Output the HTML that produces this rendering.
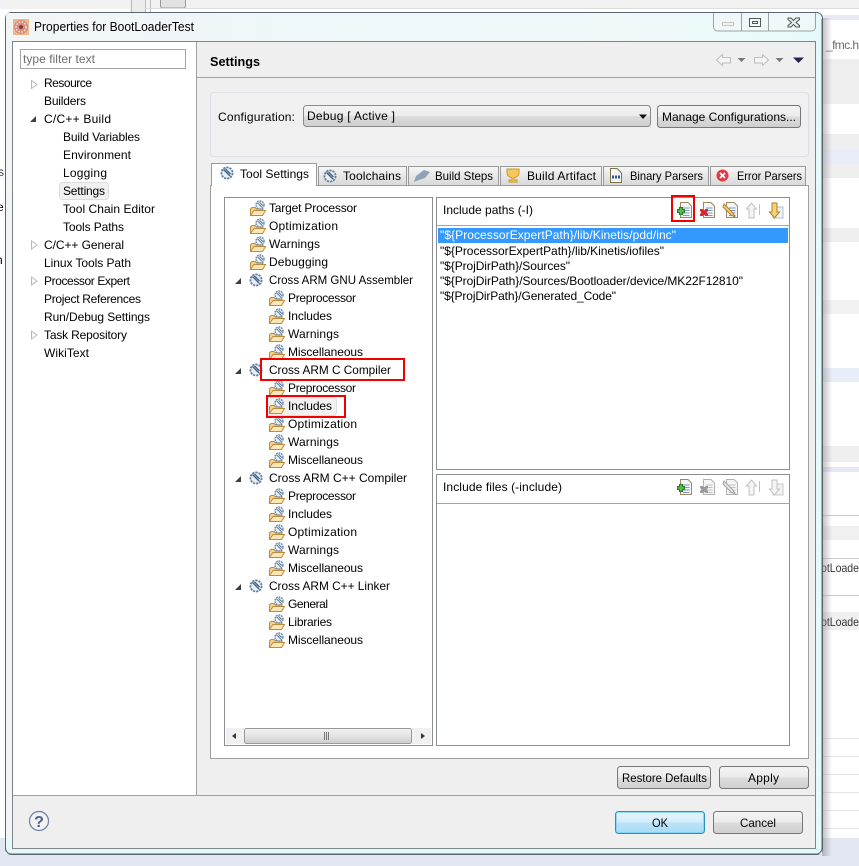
<!DOCTYPE html>
<html><head><meta charset="utf-8"><style>
html,body{margin:0;padding:0;background:#fff}
svg{display:block}
text{font-family:"Liberation Sans",sans-serif;font-size:12px;fill:#000}
</style></head><body>
<svg width="859" height="866" viewBox="0 0 859 866" xmlns="http://www.w3.org/2000/svg">
<defs>
<linearGradient id="btn" x1="0" y1="0" x2="0" y2="1"><stop offset="0" stop-color="#f4f4f4"/><stop offset=".48" stop-color="#ececec"/><stop offset=".52" stop-color="#dcdcdc"/><stop offset="1" stop-color="#cfcfcf"/></linearGradient>
<linearGradient id="ok" x1="0" y1="0" x2="0" y2="1"><stop offset="0" stop-color="#e6f5fd"/><stop offset=".48" stop-color="#d4edfb"/><stop offset=".52" stop-color="#bce3f9"/><stop offset="1" stop-color="#a7d9f5"/></linearGradient>
<linearGradient id="tab" x1="0" y1="0" x2="0" y2="1"><stop offset="0" stop-color="#f6f6f6"/><stop offset="1" stop-color="#d8d8d8"/></linearGradient>
<linearGradient id="sb" x1="0" y1="0" x2="0" y2="1"><stop offset="0" stop-color="#f2f2f2"/><stop offset=".5" stop-color="#e4e4e4"/><stop offset="1" stop-color="#cdcdcd"/></linearGradient>
<linearGradient id="title" x1="0" y1="0" x2="1" y2="0"><stop offset="0" stop-color="#f3f5f6"/><stop offset=".5" stop-color="#ecf8fa"/><stop offset=".75" stop-color="#f0f8f8"/><stop offset="1" stop-color="#e6fafb"/></linearGradient>
<linearGradient id="shadow" x1="0" y1="0" x2="1" y2="0"><stop offset="0" stop-color="#888" stop-opacity=".55"/><stop offset="1" stop-color="#888" stop-opacity="0"/></linearGradient>
<g id="gear"><circle cx="7" cy="7" r="5.6" fill="#e8eef4" stroke="#5b7d9e" stroke-width="1.8" stroke-dasharray="2.2 1"/><path d="M3.5 3.5L10 10M5.5 3L10.5 8" stroke="#47688a" stroke-width="1.5" fill="none"/></g>
<g id="folder"><path d="M.5 15.500V9L2 7.500H5L6.500 9H13L12.500 15.500Z" fill="#f9d08a" stroke="#bd8b3e"/><path d="M.5 15.500L4 10.500H15.500L12.500 15.500Z" fill="#fde6b6" stroke="#bd8b3e"/><circle cx="10" cy="5" r="4" fill="#edf2f6" stroke="#6a8aaa" stroke-width="1.400" stroke-dasharray="1.800 .8"/><path d="M7.500 2.800L12 7.300M9.500 2.300L12.800 5.600" stroke="#53759a" stroke-width="1"/></g>
<g id="doc"><path d="M3.500 .5H11L14.500 4V15.500H3.500Z" fill="#f4f6fa" stroke="#9a8a5e"/><path d="M6 6H12.500M6 8.500H12.500M6 11H12.500M6 13.500H12.500" stroke="#7d98c0"/></g>
<g id="docg" opacity=".9"><path d="M3.500 .5H11L14.500 4V15.500H3.500Z" fill="#f4f4f4" stroke="#aaa"/><path d="M6 6H12.500M6 8.500H12.500M6 11H12.500M6 13.500H12.500" stroke="#bbb"/></g>
</defs>

<!-- background -->
<rect width="859" height="866" fill="#fff"/>
<rect width="859" height="9" fill="#f2f2f2"/>
<rect x="130" y="0" width="15" height="12" fill="#ececec"/>
<path d="M131.500 0V12M145.500 0V12M150.500 0V12" stroke="#bbb"/>
<rect x="160.500" y="-3" width="25" height="11" rx="2" fill="#e2e2e2" stroke="#999"/>
<path d="M145 8.500H859" stroke="#ddd"/>
<rect x="822" y="15" width="37" height="5" fill="#e7e9f5"/>
<rect x="822" y="59" width="37" height="45" fill="#efefef"/>
<rect x="822" y="134" width="37" height="16" fill="#efefef"/>
<rect x="822" y="150" width="37" height="14" fill="#e9edf9"/>
<rect x="822" y="164" width="37" height="14" fill="#efefef"/>
<rect x="822" y="228" width="37" height="14" fill="#efefef"/>
<rect x="822" y="300" width="37" height="14" fill="#f2f2f2"/>
<rect x="822" y="368" width="37" height="14" fill="#e9edf9"/>
<rect x="822" y="446" width="37" height="16" fill="#efefef"/>
<rect x="822" y="467" width="37" height="5" fill="#e4e7f4"/>
<path d="M822 515.500H859M822 558.500H859M822 595.500H859" stroke="#ccc"/>
<rect x="822" y="526" width="37" height="14" fill="#f0f0f0"/>
<rect x="822" y="612" width="37" height="18" fill="#f0f0f0"/>
<path d="M822 738.500H859M822 756.500H859M822 774.500H859M822 792.500H859M822 810.500H859M822 828.500H859" stroke="#e4e4e4"/>
<rect x="0" y="838" width="859" height="28" fill="#e3e7f4"/>
<text x="826" y="49" textLength="33" style="fill:#6a6a6a">_fmc.h</text>
<text x="821" y="572" textLength="38" lengthAdjust="spacingAndGlyphs" style="fill:#333">otLoade</text>
<text x="821" y="626" textLength="38" lengthAdjust="spacingAndGlyphs" style="fill:#333">otLoade</text>
<text x="-2" y="176">s</text><text x="-3" y="211">e</text><text x="-4" y="264">h</text>
<rect x="0" y="170" width="10" height="10" fill="#dfeaf8" opacity=".3"/>

<!-- window shadow -->
<rect x="822" y="18" width="10" height="838" fill="url(#shadow)"/>

<!-- window frame -->
<rect x="5.500" y="12.500" width="817" height="842" rx="6" fill="url(#title)" stroke="#5c6670"/>
<rect x="6" y="838" width="816" height="16" fill="#e0fafa" opacity=".8"/>
<rect x="6" y="13" width="7" height="825" fill="#f2f5f6" opacity=".9"/>
<rect x="816" y="32" width="6" height="816" fill="#e6fafb"/>
<path d="M5.500 19V848a6 6 0 0 0 6 6H816a6 6 0 0 0 6-6V19" fill="none" stroke="#5c6670"/>

<!-- title bar -->
<rect x="13" y="19" width="16" height="16" fill="#eeb98a"/>
<circle cx="21" cy="27" r="7" fill="#d98f80"/>
<circle cx="21" cy="27" r="5" fill="none" stroke="#f6e2d2" stroke-width="1.500" stroke-dasharray="1.500 1.500"/>
<circle cx="21" cy="27" r="2" fill="#8a3b32"/>
<text x="34" y="31" textLength="160" lengthAdjust="spacingAndGlyphs" style="font-size:13px">Properties for BootLoaderTest</text>

<!-- window buttons -->
<path d="M713.500 13V27a4 4 0 0 0 4 4H811.500a4 4 0 0 0 4-4V13" fill="#f2f6f7" fill-opacity=".7" stroke="#9aa2a8"/>
<path d="M741.500 13V31M768.500 13V31" stroke="#9aa2a8"/>
<rect x="722.500" y="22.500" width="11" height="3" fill="#f4f4f4" stroke="#c4c4c4"/>
<rect x="749.500" y="18.500" width="11" height="8" fill="none" stroke="#51585f"/>
<rect x="752.500" y="21.500" width="5" height="2" fill="none" stroke="#51585f"/>
<path d="M788 18H791L793.500 20.500L796 18H799.500V19.500L796 22.500L799.500 25.500V27H796L793.500 24.500L791 27H788V25.500L791.500 22.500L788 19.500Z" fill="#e9eef0" stroke="#4b5359"/>

<!-- client -->
<rect x="12.500" y="41.500" width="803" height="807" fill="#efefef" stroke="#7f8488"/>
<rect x="13" y="42" width="183" height="753" fill="#fff"/>
<path d="M196.500 42V795M13 795.500H815M197 77.500H815" stroke="#a0a0a0"/>

<!-- filter -->
<rect x="20.500" y="49.500" width="165" height="19" fill="#fff" stroke="#a5a5a5"/>
<text x="23" y="63" textLength="72" style="fill:#6d6d6d">type filter text</text>

<!-- left tree -->
<rect x="59.500" y="182.500" width="49" height="17" rx="3" fill="#f1f1f1" stroke="#dcdcdc"/>
<path d="M31.500 80.500L37 84.500L31.500 88.500Z" fill="#fff" stroke="#b8b8b8"/>
<path d="M30 122H36V116Z" fill="#404040"/>
<path d="M31.500 241L37 245L31.500 249ZM31.500 277L37 281L31.500 285ZM31.500 331L37 335L31.500 339Z" fill="#fff" stroke="#b8b8b8"/>
<text x="44" y="87" textLength="48">Resource</text>
<text x="44" y="105" textLength="42">Builders</text>
<text x="44" y="123" textLength="67">C/C++ Build</text>
<text x="63" y="141" textLength="77">Build Variables</text>
<text x="63" y="159" textLength="68">Environment</text>
<text x="63" y="177" textLength="44">Logging</text>
<text x="63" y="195" textLength="42">Settings</text>
<text x="63" y="213" textLength="92">Tool Chain Editor</text>
<text x="63" y="231" textLength="61">Tools Paths</text>
<text x="44" y="249" textLength="80">C/C++ General</text>
<text x="44" y="267" textLength="87">Linux Tools Path</text>
<text x="44" y="285" textLength="86">Processor Expert</text>
<text x="44" y="303" textLength="97">Project References</text>
<text x="44" y="321" textLength="106">Run/Debug Settings</text>
<text x="44" y="339" textLength="83">Task Repository</text>
<text x="44" y="357" textLength="45">WikiText</text>

<!-- header nav -->
<text x="210" y="66" textLength="50" lengthAdjust="spacingAndGlyphs" style="font-size:13px;font-weight:bold">Settings</text>
<path d="M716.500 60L722.500 54.500V57.500H730.500V63H722.500V65.500Z" fill="#f4f4f4" stroke="#bdbdbd"/>
<path d="M737.500 58H745.500L741.500 62Z" fill="#777"/>
<path d="M768.500 60L762.500 54.500V57.500H754.500V63H762.500V65.500Z" fill="#f4f4f4" stroke="#bdbdbd"/>
<path d="M775.500 58H783.500L779.500 62Z" fill="#777"/>
<path d="M793 57.500H804L798.500 63Z" fill="#2c1f55"/>

<!-- config group -->
<rect x="210.500" y="92.500" width="598" height="64" rx="3" fill="#f0f0f0" stroke="#dcdfe3"/>
<text x="218" y="121" textLength="77">Configuration:</text>
<rect x="303.500" y="105.500" width="347" height="21" rx="3" fill="url(#btn)" stroke="#8b8b8b"/>
<text x="307" y="120" textLength="88">Debug  [ Active ]</text>
<path d="M639 114.500H647L643 119Z" fill="#111"/>
<rect x="657.500" y="105.500" width="143" height="22" rx="3" fill="url(#btn)" stroke="#777"/>
<text x="662" y="121" textLength="134" lengthAdjust="spacingAndGlyphs">Manage Configurations...</text>

<!-- tab panel -->
<rect x="210.500" y="185.500" width="598" height="573" fill="#fff" stroke="#a0a0a0"/>
<g stroke="#9a9a9a" fill="url(#tab)">
<rect x="318.500" y="166.500" width="88" height="19"/>
<rect x="408.500" y="166.500" width="90" height="19"/>
<rect x="500.500" y="166.500" width="101" height="19"/>
<rect x="603.500" y="166.500" width="105" height="19"/>
<rect x="710.500" y="166.500" width="95" height="19"/>
</g>
<path d="M211.500 186V163.500H316.500V186" fill="#fff" stroke="#9a9a9a"/>
<rect x="212" y="184" width="104" height="3" fill="#fff"/>
<use href="#gear" x="220" y="166"/>
<text x="240" y="178" textLength="69">Tool Settings</text>
<use href="#gear" x="323" y="169"/>
<text x="343" y="180" textLength="58">Toolchains</text>
<path d="M414 182L416 176L424 170L430 172L425 178L419 180Z" fill="#8fa3b8"/>
<text x="435" y="180" textLength="58" lengthAdjust="spacingAndGlyphs">Build Steps</text>
<path d="M507 169H519V173C519 177 515 177 514 178V180H517V182H509V180H512V178C511 177 507 177 507 173Z" fill="#f3c95c" stroke="#c79a2c"/>
<text x="527" y="180" textLength="69">Build Artifact</text>
<path d="M610.500 168.500H617L621.500 173V182.500H610.500Z" fill="#f5f5fa" stroke="#7d7446"/>
<path d="M612 177H620" stroke="#30508f" stroke-width="3" stroke-dasharray="2 1"/>
<text x="630" y="180" textLength="73" lengthAdjust="spacingAndGlyphs">Binary Parsers</text>
<circle cx="722.500" cy="175.500" r="6" fill="#e23c42"/>
<path d="M720 173L725 178M725 173L720 178" stroke="#fff" stroke-width="1.600"/>
<text x="737" y="180" textLength="65" lengthAdjust="spacingAndGlyphs">Error Parsers</text>

<!-- middle tree -->
<rect x="224.500" y="197.500" width="208" height="548" fill="#fff" stroke="#8b8f93"/>
<rect x="266.500" y="397.500" width="70" height="18" rx="3" fill="#f1f1f1" stroke="#dcdcdc"/>
<use href="#folder" x="250" y="200"/><text x="269" y="212" textLength="88">Target Processor</text>
<use href="#folder" x="250" y="218"/><text x="269" y="230" textLength="69">Optimization</text>
<use href="#folder" x="250" y="236"/><text x="269" y="248" textLength="51">Warnings</text>
<use href="#folder" x="250" y="254"/><text x="269" y="266" textLength="59">Debugging</text>

<path d="M235 284H241V278Z" fill="#404040"/><use href="#gear" x="249" y="273"/><text x="269" y="284" textLength="144" lengthAdjust="spacingAndGlyphs">Cross ARM GNU Assembler</text>
<use href="#folder" x="269" y="290"/><text x="288" y="302" textLength="68">Preprocessor</text>
<use href="#folder" x="269" y="308"/><text x="288" y="320" textLength="44">Includes</text>
<use href="#folder" x="269" y="326"/><text x="288" y="338" textLength="51">Warnings</text>
<use href="#folder" x="269" y="344"/><text x="288" y="356" textLength="75">Miscellaneous</text>

<path d="M235 374H241V368Z" fill="#404040"/><use href="#gear" x="249" y="363"/><text x="269" y="374" textLength="122" lengthAdjust="spacingAndGlyphs">Cross ARM C Compiler</text>
<use href="#folder" x="269" y="380"/><text x="288" y="392" textLength="68">Preprocessor</text>
<use href="#folder" x="269" y="398"/><text x="288" y="410" textLength="44">Includes</text>
<use href="#folder" x="269" y="416"/><text x="288" y="428" textLength="69">Optimization</text>
<use href="#folder" x="269" y="434"/><text x="288" y="446" textLength="51">Warnings</text>
<use href="#folder" x="269" y="452"/><text x="288" y="464" textLength="75">Miscellaneous</text>

<path d="M235 482H241V476Z" fill="#404040"/><use href="#gear" x="249" y="471"/><text x="269" y="482" textLength="138" lengthAdjust="spacingAndGlyphs">Cross ARM C++ Compiler</text>
<use href="#folder" x="269" y="488"/><text x="288" y="500" textLength="68">Preprocessor</text>
<use href="#folder" x="269" y="506"/><text x="288" y="518" textLength="44">Includes</text>
<use href="#folder" x="269" y="524"/><text x="288" y="536" textLength="69">Optimization</text>
<use href="#folder" x="269" y="542"/><text x="288" y="554" textLength="51">Warnings</text>
<use href="#folder" x="269" y="560"/><text x="288" y="572" textLength="75">Miscellaneous</text>

<path d="M235 590H241V584Z" fill="#404040"/><use href="#gear" x="249" y="579"/><text x="269" y="590" textLength="121" lengthAdjust="spacingAndGlyphs">Cross ARM C++ Linker</text>
<use href="#folder" x="269" y="596"/><text x="288" y="608" textLength="40">General</text>
<use href="#folder" x="269" y="614"/><text x="288" y="626" textLength="44">Libraries</text>
<use href="#folder" x="269" y="632"/><text x="288" y="644" textLength="75">Miscellaneous</text>

<!-- tree scrollbar -->
<rect x="226" y="728" width="205" height="16" fill="#f0f0f0"/>
<rect x="244.500" y="728.500" width="167" height="15" rx="2" fill="url(#sb)" stroke="#9a9a9a"/>
<path d="M324.500 732V740M326.500 732V740M328.500 732V740" stroke="#777"/>
<path d="M236 733V739L232 736Z" fill="#333"/>
<path d="M421 733V739L425 736Z" fill="#333"/>

<!-- include paths -->
<rect x="436.500" y="197.500" width="353" height="272" fill="#fff" stroke="#8b8f93"/>
<path d="M437 225.500H790" stroke="#a5a5a5"/>
<text x="443" y="214" textLength="90">Include paths (-I)</text>
<rect x="438" y="228" width="350" height="15" fill="#3399ff"/>
<text x="440" y="239" textLength="236" style="fill:#fff">"${ProcessorExpertPath}/lib/Kinetis/pdd/inc"</text>
<text x="440" y="255" textLength="224">"${ProcessorExpertPath}/lib/Kinetis/iofiles"</text>
<text x="440" y="270" textLength="130">"${ProjDirPath}/Sources"</text>
<text x="440" y="285" textLength="303">"${ProjDirPath}/Sources/Bootloader/device/MK22F12810"</text>
<text x="440" y="300" textLength="176">"${ProjDirPath}/Generated_Code"</text>

<!-- toolbar 1 -->
<use href="#doc" x="677" y="202"/>
<path d="M677.500 209.500H679.500V207.500H682.500V209.500H684.500V212.500H682.500V214.500H679.500V212.500H677.500Z" fill="#58b947" stroke="#2a7a2a"/>
<use href="#doc" x="700" y="202"/>
<path d="M700 209H702.500L704 210.500L705.500 209H708V211L706.500 212.500L708 214V216H705.500L704 214.500L702.500 216H700V214L701.500 212.500L700 211Z" fill="#d8262c"/>
<use href="#doc" x="723" y="202"/>
<path d="M724 204L733 213L735 217L731 215L723 207Z" fill="#f2cd7a" stroke="#a8803a"/>
<path d="M746.500 209L751.500 203L756.500 209H754V218H749V209Z" fill="#f4f4f4" stroke="#c2c2c2"/>
<path d="M759.500 204V215" stroke="#c2c2c2"/>
<rect x="773" y="207" width="10" height="11" fill="#eef2fa" stroke="#b5bccb"/>
<path d="M769.500 212L774.500 218L779.500 212H777V203H772V212Z" fill="#f7d36f" stroke="#a9812f"/>

<!-- include files -->
<rect x="436.500" y="474.500" width="353" height="271" fill="#fff" stroke="#8b8f93"/>
<path d="M437 503.500H790" stroke="#a5a5a5"/>
<text x="443" y="491" textLength="119">Include files (-include)</text>
<use href="#doc" x="677" y="479"/>
<path d="M677.500 486.500H679.500V484.500H682.500V486.500H684.500V489.500H682.500V491.500H679.500V489.500H677.500Z" fill="#58b947" stroke="#2a7a2a"/>
<use href="#docg" x="700" y="479"/>
<path d="M700 486H702.500L704 487.500L705.500 486H708V488L706.500 489.500L708 491V493H705.500L704 491.500L702.500 493H700V491L701.500 489.500L700 488Z" fill="#9a9a9a"/>
<use href="#docg" x="723" y="479"/>
<path d="M724 481L733 490L735 494L731 492L723 484Z" fill="#e8e8e8" stroke="#a0a0a0"/>
<path d="M746.500 486L751.500 480L756.500 486H754V495H749V486Z" fill="#f4f4f4" stroke="#c2c2c2"/>
<path d="M759.500 481V492" stroke="#c2c2c2"/>
<rect x="773" y="484" width="10" height="11" fill="#f2f2f2" stroke="#c8c8c8"/>
<path d="M769.500 489L774.500 495L779.500 489H777V480H772V489Z" fill="#f4f4f4" stroke="#c2c2c2"/>

<!-- buttons -->
<rect x="617.500" y="766.500" width="93" height="22" rx="3" fill="url(#btn)" stroke="#777"/>
<text x="622" y="782" textLength="85" lengthAdjust="spacingAndGlyphs">Restore Defaults</text>
<rect x="719.500" y="766.500" width="89" height="22" rx="3" fill="url(#btn)" stroke="#777"/>
<text x="748" y="782" textLength="31">Apply</text>
<rect x="615.500" y="811.500" width="89" height="22" rx="3" fill="url(#ok)" stroke="#2c8fc4"/>
<rect x="616.500" y="812.500" width="87" height="20" rx="2" fill="none" stroke="#6fd0f5" stroke-opacity=".7"/>
<text x="652" y="827" textLength="16" lengthAdjust="spacingAndGlyphs">OK</text>
<rect x="713.500" y="811.500" width="89" height="22" rx="3" fill="url(#btn)" stroke="#777"/>
<text x="740" y="827" textLength="36" lengthAdjust="spacingAndGlyphs">Cancel</text>

<!-- help -->
<circle cx="39" cy="821" r="9.500" fill="#f3f3f6" stroke="#6b7fa3" stroke-width="1.200"/>
<text x="39" y="827" text-anchor="middle" style="font-size:16px;font-weight:bold;fill:#4e6088">?</text>

<!-- red highlight boxes -->
<g fill="none" stroke="#f00000" stroke-width="2">
<rect x="672" y="196" width="22" height="25"/>
<rect x="261" y="359" width="143" height="21"/>
<rect x="267" y="396" width="78" height="21"/>
</g>
</svg>
</body></html>
